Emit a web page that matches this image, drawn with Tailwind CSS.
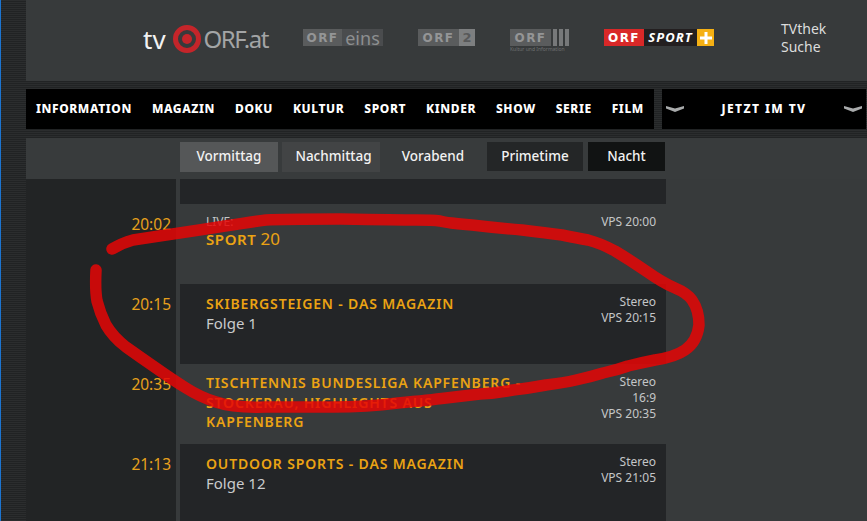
<!DOCTYPE html>
<html lang="de">
  <head>
    <meta charset="UTF-8" />
    <meta name="viewport" content="width=device-width, initial-scale=1.0" />
    <script src="https://cdn.jsdelivr.net/npm/@tailwindcss/browser@4"></script>
    <title>tv.ORF.at</title>
  </head>
  <body class="h-[521px] w-[867px] overflow-hidden bg-[#222425] font-['Noto_Sans',sans-serif]">
    <div class="relative flex h-[521px] w-[867px] overflow-hidden">
      <div class="w-px shrink-0 bg-[#1b74d0]"></div>
      <div class="w-[25px] shrink-0 bg-[repeating-linear-gradient(0deg,#2b2d2e_0_1px,#212324_1px_2px)]"></div>

      <div class="flex w-[841px] flex-col bg-[repeating-linear-gradient(0deg,#2b2d2e_0_1px,#212324_1px_2px)]">
        <!-- header -->
        <header class="flex h-[81px] shrink-0 items-center bg-[#373a3b] pb-[6px] pl-[117px]">
          <div class="mt-[3px] flex w-[127px] shrink-0 items-center">
            <span class="text-[26px] leading-none text-[#f2f2f2]">tv</span>
            <svg class="ml-[7px] shrink-0" width="28" height="28" viewBox="0 0 28 28">
              <circle cx="14" cy="14" r="11.5" fill="none" stroke="#c4252a" stroke-width="5" />
              <circle cx="14" cy="14" r="5" fill="#c4252a" />
            </svg>
            <span class="ml-[3px] text-[24px] leading-none tracking-[-1.5px] text-[#a3a5a6]">ORF.at</span>
          </div>

          <div class="ml-[33px] flex h-[17px] w-[80px] shrink-0">
            <span class="flex w-[39px] items-center justify-center bg-[#5a5c5d] font-['DejaVu_Sans',sans-serif] text-[12px] font-bold tracking-[1.4px] text-[#949596]">ORF</span>
            <span class="flex w-[41px] items-center justify-center bg-[#4a4c4e] text-[18px] leading-none text-[#8d8f90]">eins</span>
          </div>

          <div class="ml-[35px] flex h-[17px] w-[57px] shrink-0">
            <span class="flex w-[41px] items-center justify-center bg-[#5a5c5d] font-['DejaVu_Sans',sans-serif] text-[12px] font-bold tracking-[1.4px] text-[#949596]">ORF</span>
            <span class="flex w-[16px] items-center justify-center bg-[#7d7f80] font-['DejaVu_Sans',sans-serif] text-[13px] font-bold text-[#58595a]">2</span>
          </div>

          <div class="ml-[35px] mt-[7px] flex w-[59px] shrink-0 flex-col">
            <div class="flex h-[17px]">
              <span class="flex w-[41px] items-center justify-center bg-[#5a5c5d] font-['DejaVu_Sans',sans-serif] text-[12px] font-bold tracking-[1.4px] text-[#949596]">ORF</span>
              <div class="ml-[2px] flex gap-[2px]">
                <span class="h-[17px] w-[4px] bg-[#77797a]"></span>
                <span class="h-[17px] w-[4px] bg-[#77797a]"></span>
                <span class="h-[17px] w-[4px] bg-[#77797a]"></span>
              </div>
            </div>
            <span class="whitespace-nowrap text-[5px] leading-[7px] text-[#6f7172]">Kultur und Information</span>
          </div>

          <div class="ml-[35px] flex h-[17px] w-[110px] shrink-0">
            <span class="flex w-[40px] items-center justify-center bg-[#d92828] font-['DejaVu_Sans',sans-serif] text-[12px] font-bold tracking-[1.4px] text-white">ORF</span>
            <span class="flex w-[53px] items-center justify-center bg-[#231f20] text-[13px] font-bold italic tracking-[1px] text-white">SPORT</span>
            <span class="flex w-[17px] items-center justify-center bg-[#f5b014]">
              <svg width="12" height="12" viewBox="0 0 12 12"><path d="M4.5 0h3v4.5H12v3H7.5V12h-3V7.5H0v-3h4.5z" fill="#fff" /></svg>
            </span>
          </div>

          <div class="ml-[67px] shrink-0 text-[14px] leading-[18px] text-[#dcdddd]">
            <div>TVthek</div>
            <div>Suche</div>
          </div>
        </header>

        <!-- navigation -->
        <nav class="mt-[8px] flex h-[40px] shrink-0 gap-[8px] text-[12px] font-extrabold text-white">
          <ul class="flex w-[628px] items-center justify-between bg-black px-[10px] tracking-[0.6px]">
            <li>INFORMATION</li>
            <li>MAGAZIN</li>
            <li>DOKU</li>
            <li>KULTUR</li>
            <li>SPORT</li>
            <li>KINDER</li>
            <li>SHOW</li>
            <li>SERIE</li>
            <li>FILM</li>
          </ul>
          <div class="flex w-[204px] items-center justify-between bg-black px-[4px] tracking-[1.4px]">
            <svg width="18" height="6" viewBox="0 0 18 6"><path d="M0 0l9 2.5L18 0v2.5L9 6 0 2.5z" fill="#a9abac" /></svg>
            <span>JETZT IM TV</span>
            <svg width="18" height="6" viewBox="0 0 18 6"><path d="M0 0l9 2.5L18 0v2.5L9 6 0 2.5z" fill="#a9abac" /></svg>
          </div>
        </nav>

        <!-- day parts -->
        <div class="mt-[9px] flex h-[41px] shrink-0 gap-[4px] bg-[#383b3c] pl-[154px] pt-[4px] text-[13.5px] font-medium text-[#f2f2f2]">
          <button class="h-[30px] w-[98px] bg-[#555758] pb-[2px]">Vormittag</button>
          <button class="h-[30px] w-[98px] bg-[#424445] pb-[2px] pl-[5px]">Nachmittag</button>
          <button class="h-[30px] w-[98px] pb-[2px]">Vorabend</button>
          <button class="ml-[1px] h-[29px] w-[96px] bg-[#242627]">Primetime</button>
          <button class="ml-[1px] h-[29px] w-[77px] bg-[#111313]">Nacht</button>
        </div>

        <!-- schedule -->
        <div class="flex h-[342px] shrink-0 bg-[#373a3b]">
          <div class="w-[150px] bg-[#222425] pr-[5px] pt-[25px] text-right text-[15.5px] text-[#e8a11c]">
            <div class="h-[80px] pt-[8px] leading-[24px]">20:02</div>
            <div class="h-[80px] pt-[8px] leading-[24px]">20:15</div>
            <div class="h-[80px] pt-[8px] leading-[24px]">20:35</div>
            <div class="h-[77px] pt-[8px] leading-[24px]">21:13</div>
          </div>

          <div class="ml-[4px] w-[486px]">
            <div class="h-[25px] bg-[#232527]"></div>

            <div class="flex h-[80px] justify-between pl-[26px] pr-[10px] pt-[10px]">
              <div>
                <div class="text-[12px] leading-[15px] text-[#c4c6c7]">LIVE:</div>
                <div class="flex items-baseline gap-[4px] text-[15px] font-semibold leading-[20px] tracking-[0.6px] text-[#eba313]">SPORT <span class="text-[17px] font-normal tracking-normal">20</span></div>
              </div>
              <div class="text-right text-[12px] leading-[16px] text-[#c4c6c7]">VPS 20:00</div>
            </div>

            <div class="flex h-[80px] justify-between bg-[#232527] pl-[26px] pr-[10px] pt-[10px]">
              <div>
                <div class="text-[14px] font-semibold leading-[20px] tracking-[0.85px] text-[#eba313]">SKIBERGSTEIGEN - DAS MAGAZIN</div>
                <div class="-mt-[1px] text-[15px] leading-[20px] text-[#c9cbcc]">Folge 1</div>
              </div>
              <div class="text-right text-[12px] leading-[16px] text-[#c4c6c7]">Stereo<br />VPS 20:15</div>
            </div>

            <div class="flex h-[80px] justify-between pl-[26px] pr-[10px] pt-[9px]">
              <div class="w-[320px] text-[14px] font-semibold leading-[19.5px] tracking-[0.85px] text-[#eba313]">TISCHTENNIS BUNDESLIGA KAPFENBERG - STOCKERAU, HIGHLIGHTS AUS KAPFENBERG</div>
              <div class="pt-[1px] text-right text-[12px] leading-[16px] text-[#c4c6c7]">Stereo<br />16:9<br />VPS 20:35</div>
            </div>

            <div class="flex h-[77px] justify-between bg-[#232527] pl-[26px] pr-[10px] pt-[10px]">
              <div>
                <div class="text-[14px] font-semibold leading-[20px] tracking-[0.85px] text-[#eba313]">OUTDOOR SPORTS - DAS MAGAZIN</div>
                <div class="-mt-[1px] text-[15px] leading-[20px] text-[#c9cbcc]">Folge 12</div>
              </div>
              <div class="text-right text-[12px] leading-[16px] text-[#c4c6c7]">Stereo<br />VPS 21:05</div>
            </div>
          </div>
        </div>
      </div>

      <!-- hand drawn circle on top of the screenshot -->
      <svg class="absolute left-0 top-0 opacity-85" width="867" height="521" viewBox="0 0 867 521" fill="none">
        <path d="M112 249Q122 243 133 240Q133 240 166 235Q200 230 225 226Q250 222 266 220Q283 219 340 219Q400 220 416 220Q433 220 440 221Q447 223 472 225Q497 228 522 230Q547 233 562 235Q577 238 588 240Q600 243 615 251Q630 260 646 271Q663 283 675 288Q687 293 692 300Q699 310 699 325Q697 342 685 350Q675 357 655 360Q640 363 628 366Q617 370 603 373Q590 377 576 380Q563 383 546 385Q530 388 513 390Q497 393 480 394Q463 396 446 398Q430 400 398 403Q367 407 333 407Q300 407 266 407Q233 408 216 402Q200 397 186 388Q173 380 156 368Q140 357 126 347Q113 337 106 325Q100 313 97 301Q95 290 96 270" stroke="#e60606" stroke-width="11.5" stroke-linecap="round" stroke-linejoin="round" />
      </svg>
    </div>
  </body>
</html>
